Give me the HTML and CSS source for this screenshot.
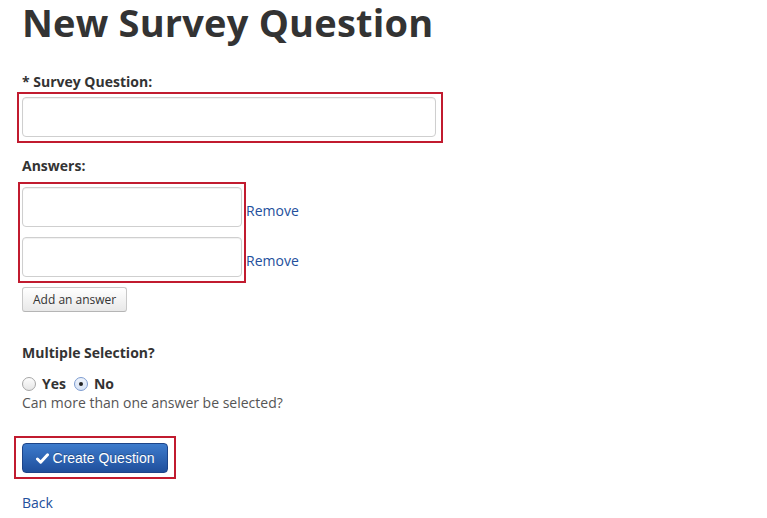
FILE: index.html
```html
<!DOCTYPE html>
<html>
<head>
<meta charset="utf-8">
<link rel="stylesheet" href="styles.css">
</head>
<body>
<div class="page">
  <h1 class="title">New Survey Question</h1>

  <div class="field-label first">* Survey Question:</div>
  <div class="hl hl-question">
    <input class="text-input wide" type="text">
  </div>

  <div class="field-label answers-label">Answers:</div>
  <div class="answers">
    <div class="hl hl-answers">
      <input class="text-input narrow" type="text">
      <input class="text-input narrow" type="text">
    </div>
    <div class="removes">
      <div class="remove-cell"><a href="#" class="link">Remove</a></div>
      <div class="remove-cell"><a href="#" class="link">Remove</a></div>
    </div>
  </div>
  <button class="btn-default" type="button">Add an answer</button>

  <div class="field-label multi-label">Multiple Selection?</div>
  <div class="radios">
    <label class="radio"><span class="radio-dot"></span><span>Yes</span></label>
    <label class="radio"><span class="radio-dot checked"></span><span>No</span></label>
  </div>
  <div class="help">Can more than one answer be selected?</div>

  <div class="hl hl-submit">
    <button class="btn-primary" type="button"><svg class="check" viewBox="0 0 14 12" width="13" height="11"><path d="M1.5 6.5 L5 10 L12.5 2" fill="none" stroke="#fff" stroke-width="3.2" stroke-linejoin="round" stroke-linecap="round"/></svg>Create Question</button>
  </div>

  <div class="back-row"><a href="#" class="link">Back</a></div>
</div>
</body>
</html>
```
FILE: styles.css
```css
html, body {
  margin: 0;
  padding: 0;
  background: #fff;
}
body {
  font-family: "Open Sans", "DejaVu Sans", sans-serif;
  font-size: 14px;
  line-height: 20px;
  color: #333;
}
.page {
  padding: 0 0 0 22px;
}
.title {
  margin: 0;
  font-size: 38px;
  line-height: 44px;
  font-weight: 700;
  color: #333;
  white-space: nowrap;
  letter-spacing: 0.2px;
}
.field-label {
  font-weight: 700;
  color: #333;
}
.field-label.first {
  margin-top: 28px;
}
.hl {
  border: 2px solid #c11b2f;
  box-sizing: border-box;
}
.hl-question {
  width: 426px;
  margin-left: -5px;
  padding: 3px 5px 4px 3px;
}
.text-input {
  display: block;
  box-sizing: border-box;
  height: 40px;
  border: 1px solid #cfcfcf;
  border-radius: 4px;
  background: #fff;
  box-shadow: inset 0 1px 1px rgba(0,0,0,0.06);
  margin: 0;
  padding: 4px 6px;
  font: inherit;
}
.wide {
  width: 414px;
}
.narrow {
  width: 220px;
}
.narrow + .narrow {
  margin-top: 10px;
}
.answers-label {
  margin-top: 13px;
}
.answers {
  display: flex;
  margin-top: 6px;
  margin-left: -4px;
}
.hl-answers {
  width: 228px;
  padding: 3px 2px 4px 2px;
}
.removes {
  padding-top: 5px;
}
.remove-cell {
  height: 40px;
  box-sizing: border-box;
  padding-top: 14px;
}
.remove-cell + .remove-cell {
  margin-top: 10px;
}
.link {
  color: #234f9c;
  text-decoration: none;
}
.btn-default {
  display: block;
  margin-top: 4px;
  height: 25px;
  box-sizing: border-box;
  padding: 0 10px;
  border: 1px solid #c8c8c8;
  border-bottom-color: #b5b5b5;
  border-radius: 3px;
  background: linear-gradient(#ffffff, #e8e8e8);
  font-family: "Open Sans", sans-serif;
  font-size: 12px;
  line-height: 23px;
  color: #333;
  white-space: nowrap;
}
.multi-label {
  margin-top: 31px;
}
.radios {
  display: flex;
  gap: 8px;
  margin-top: 11px;
  font-weight: 700;
  font-size: 14px;
}
.radio {
  display: flex;
  align-items: center;
  gap: 6px;
}
.radio-dot {
  width: 12px;
  height: 12px;
  border-radius: 50%;
  border: 1px solid #a6a6a6;
  background: linear-gradient(#fdfdfd, #e6e6e6);
  box-sizing: content-box;
  position: relative;
}
.radio-dot.checked {
  border-color: #7c9bd0;
  background: linear-gradient(#eef3fb, #d6e2f5);
}
.radio-dot.checked::after {
  content: "";
  position: absolute;
  width: 4px;
  height: 4px;
  border-radius: 50%;
  background: #222;
  left: 4px;
  top: 4px;
}
.help {
  color: #555;
  margin-top: -1px;
}
.hl-submit {
  margin-top: 23px;
  margin-left: -8px;
  width: 162px;
  padding: 5px 6px 4px;
}
.btn-primary {
  display: flex;
  align-items: center;
  justify-content: center;
  gap: 4px;
  width: 146px;
  height: 30px;
  box-sizing: border-box;
  margin: 0;
  padding: 0;
  border: 1px solid #1c4489;
  border-radius: 4px;
  background: linear-gradient(#3d7bcc, #1f4f9c);
  color: #fff;
  font-family: "Liberation Sans", Arial, sans-serif;
  font-size: 14px;
  line-height: 20px;
  text-shadow: 0 -1px 0 rgba(0,0,0,0.25);
}
.check {
  display: block;
}
.back-row {
  margin-top: 14px;
}
```
